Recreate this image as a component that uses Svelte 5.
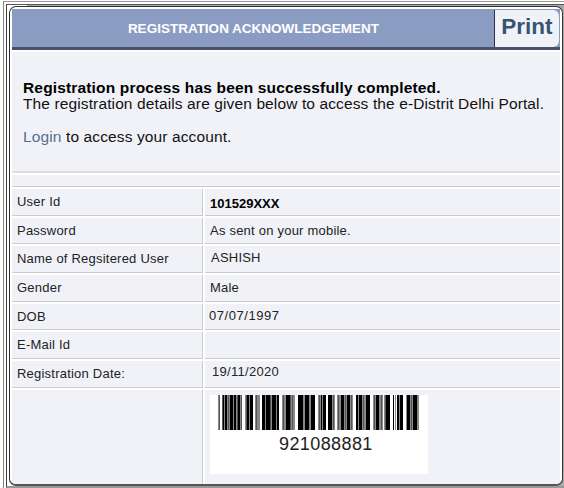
<script>
    const rows = [
        { label: 'User Id', value: '101529XXX', kind: 'user' },
        { label: 'Password', value: 'As sent on your mobile.', kind: 'password' },
        { label: 'Name of Regsitered User', value: 'ASHISH', kind: 'name' },
        { label: 'Gender', value: 'Male', kind: 'gender' },
        { label: 'DOB', value: '07/07/1997', kind: 'dob' },
        { label: 'E-Mail Id', value: '', kind: 'email' },
        { label: 'Registration Date:', value: '19/11/2020', kind: 'date' }
    ];

    // one character per pixel: # black, + dark grey, - grey, . white
    const pattern =
        '-+..+#-##-+-###-##-+##-+...-+##-###..-+---..###-####+-####-##...' +
        '-+--####+-+--...#####--####--####...-+-#-###..####-+-..' +
        '-+--###-+-###-+-...##-###-+--####...-+-###--+-.-+####...' +
        '#.-.##-###...-###-+-####--';

    const shades = { '#': '#000', '+': '#555', '-': '#888' };
    const bars = pattern.split('')
        .map((c, x) => ({ x, fill: shades[c] }))
        .filter(b => b.fill);
</script>

<div class="outer">
    <div class="inner">
        <div class="panel">
            <div class="header">
                <h1>REGISTRATION ACKNOWLEDGEMENT</h1>
                <button>Print</button>
            </div>

            <div class="message">
                <b>Registration process has been successfully completed.</b>
                <p>The registration details are given below to access the e-Distrit Delhi Portal.</p>
                <p class="login"><span class="link">Login</span> to access your account.</p>
            </div>

            <div class="strip"></div>

            <div class="details">
                {#each rows as row}
                    <div class="cell label"><span>{row.label}</span></div>
                    <div class="cell value {row.kind}"><span>{row.value}</span></div>
                {/each}
                <div class="cell label last"></div>
                <div class="cell value last">
                    <div class="barcode">
                        <svg width="201" height="35" viewBox="0 0 201 35" shape-rendering="crispEdges">
                            {#each bars as bar}
                                <rect x={bar.x} y="0" width="1" height="35" fill={bar.fill} />
                            {/each}
                        </svg>
                        <div class="number">921088881</div>
                    </div>
                </div>
            </div>
        </div>
    </div>
</div>

<style>
    :global(body) {
        background: #fff;
        overflow: hidden;
    }

    .outer, .inner, .panel, .header, .message, .cell, button {
        box-sizing: border-box;
    }

    .outer {
        font-family: "Liberation Sans", Arial, sans-serif;
        width: 561px;
        height: 487px;
        margin: 1px 0 0 3px;
        padding: 2px 0 0 2px;
        border-left: 1px solid #858585;
        border-top: 1px solid #999;
    }

    .inner {
        height: 484px;
        padding: 1px 0 0 2px;
        border-left: 1px solid #444;
        border-top: 1px solid #555;
        border-bottom: 2px solid #999;
        background: linear-gradient(to right, #fff 20px, #aaa 20px);
    }

    .panel {
        width: 554px;
        height: 480px;
        padding: 2px;
        border: 1px solid #333;
        border-bottom: 2px solid #555;
        border-radius: 7px;
        background: #fff;
        overflow: hidden;
    }

    .header {
        display: flex;
        height: 41px;
        padding: 1px 1px 0 0;
        background: #8b9cc3;
        border-bottom: 3px solid #4a5268;
    }

    h1 {
        flex: 1;
        margin: 0;
        padding: 1px 0 0 1px;
        color: #fff;
        font-size: 13.5px;
        line-height: 36px;
        text-align: center;
    }

    button {
        width: 65px;
        height: 37px;
        padding: 0 0 3px;
        border: 0;
        border-left: 1px solid #29364c;
        border-radius: 0 6px 6px 0;
        background: #f1f2f8;
        color: #345474;
        font-family: inherit;
        font-size: 22.5px;
        font-weight: bold;
    }

    .message {
        height: 121px;
        margin-top: 2px;
        padding: 28px 0 0 11px;
        background: #f1f2f8;
        border-bottom: 2px solid #ddd;
        color: #111;
        font-size: 15.5px;
        line-height: 16px;
        letter-spacing: 0.12px;
        white-space: nowrap;
    }

    b, p {
        display: block;
        margin: 0;
    }

    .message b {
        color: #000;
        letter-spacing: 0.16px;
    }

    .login {
        margin-top: 17px;
    }

    .link {
        color: #55708d;
    }

    .strip {
        height: 11px;
        margin-top: 2px;
        background: #f1f2f8;
        border-bottom: 1px solid #ccc;
    }

    .details {
        display: grid;
        grid-template-columns: 191px 1fr;
        grid-template-rows: repeat(7, 26.67px) 94px;
        gap: 2px;
        margin-top: 2px;
    }

    .cell {
        background: #f1f2f8;
        border-bottom: 1px solid #ccc;
        color: #222;
        font-size: 13px;
        line-height: 26px;
        letter-spacing: 0.22px;
        white-space: nowrap;
    }

    .label {
        padding-left: 5px;
        border-right: 1px solid #ccc;
    }

    .value {
        padding-left: 5px;
    }

    .cell.last {
        border-bottom: 0;
    }

    .value.last {
        padding-top: 5px;
    }

    .user {
        color: #000;
        font-weight: bold;
        line-height: 29px;
        letter-spacing: 0;
    }

    .name {
        padding-left: 6px;
        line-height: 24px;
    }

    .dob {
        padding-left: 4px;
        line-height: 24px;
        letter-spacing: 0.55px;
    }

    .date {
        padding-left: 7px;
        line-height: 22px;
        letter-spacing: 0.3px;
    }

    .barcode {
        width: 218px;
        height: 79px;
        background: #fff;
    }

    svg {
        display: block;
        margin-left: 8px;
    }

    .number {
        padding: 4px 0 0 69px;
        color: #222;
        font-size: 18px;
        line-height: 20px;
        letter-spacing: 0.4px;
    }
</style>
